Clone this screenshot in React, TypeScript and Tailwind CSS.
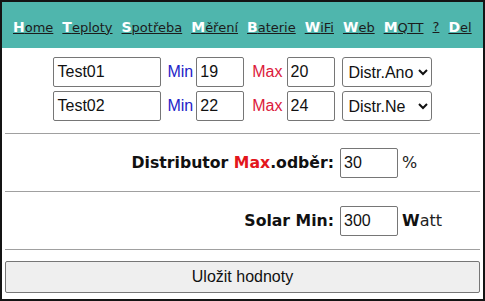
import React from 'react';

const navItems: { first: string; rest: string }[] = [
  { first: 'H', rest: 'ome' },
  { first: 'T', rest: 'eploty' },
  { first: 'S', rest: 'potřeba' },
  { first: 'M', rest: 'ěření' },
  { first: 'B', rest: 'aterie' },
  { first: 'W', rest: 'iFi' },
  { first: 'W', rest: 'eb' },
  { first: 'M', rest: 'QTT' },
  { first: '', rest: '?' },
  { first: 'D', rest: 'el' },
];

const inputCls =
  'h-[30px] border border-[#767676] rounded-[2px] bg-white px-[3px] text-[16px] text-[#111] outline-none';

const SensorRow = ({ name, min, max, distr }: { name: string; min: string; max: string; distr: string }) => (
  <div className="flex items-center justify-center">
    <input className={`${inputCls} w-[108px]`} defaultValue={name} />
    <span className="ml-[6px] mr-[3px] text-[16px] text-[#2323c8]">Min</span>
    <input className={`${inputCls} w-[48px]`} defaultValue={min} />
    <span className="ml-[8px] mr-[4px] text-[16px] text-[#dc1a3c]">Max</span>
    <input className={`${inputCls} w-[48px]`} defaultValue={max} />
    <select
      className="ml-[7px] h-[30px] w-[90px] border border-[#767676] rounded-[3px] bg-white pl-[2px] text-[16px] text-[#111]"
      defaultValue={distr}
    >
      <option value="Distr.Ano">Distr.Ano</option>
      <option value="Distr.Ne">Distr.Ne</option>
    </select>
  </div>
);

export default function App() {
  return (
    <div
      className="w-[485px] h-[301px] border-2 border-[#141414] bg-white flex flex-col"
      style={{ fontFamily: '"Liberation Sans", Arial, sans-serif' }}
    >
      {/* Menu */}
      <nav
        className="h-[46px] shrink-0 bg-[#4fb6ad] flex items-center gap-[9px] pl-[11px] pt-[4px] text-[13px]"
        style={{ fontFamily: '"DejaVu Sans", Verdana, sans-serif' }}
      >
        {navItems.map((item, i) => (
          <a key={i} href="#" className="text-[#1c1c1c] underline">
            {item.first && <span className="font-bold text-white text-[14px]">{item.first}</span>}
            {item.rest}
          </a>
        ))}
      </nav>

      <div className="flex-1 flex flex-col px-[3px]">
        <div className="mt-[9px] flex flex-col gap-[4px]">
          <SensorRow name="Test01" min="19" max="20" distr="Distr.Ano" />
          <SensorRow name="Test02" min="22" max="24" distr="Distr.Ne" />
        </div>

        <hr className="mt-[12px] border-t border-[#a0a0a0]" />

        <div
          className="mt-[14px] flex items-center text-[16px] text-[#111]"
          style={{ fontFamily: '"DejaVu Sans", Verdana, sans-serif' }}
        >
          <span className="w-[335px] pr-[6px] text-right font-bold text-[15.7px]">
            Distributor <span className="text-[#e3161c]">Max</span>.odběr:
          </span>
          <input
            className={`${inputCls} w-[58px]`}
            style={{ fontFamily: '"Liberation Sans", Arial, sans-serif' }}
            defaultValue="30"
          />
          <span className="ml-[4px] text-[#222]">%</span>
        </div>

        <hr className="mt-[13px] border-t border-[#a0a0a0]" />

        <div
          className="mt-[14px] flex items-center text-[16px] text-[#111]"
          style={{ fontFamily: '"DejaVu Sans", Verdana, sans-serif' }}
        >
          <span className="w-[335px] pr-[6px] text-right font-bold text-[15.7px]">Solar Min:</span>
          <input
            className={`${inputCls} w-[58px]`}
            style={{ fontFamily: '"Liberation Sans", Arial, sans-serif' }}
            defaultValue="300"
          />
          <span className="ml-[4px] text-[#222]">
            <b className="text-[#111]">W</b>att
          </span>
        </div>

        <hr className="mt-[13px] border-t border-[#a0a0a0]" />

        <button className="mt-[11px] h-[32px] w-full border border-[#767676] rounded-[2px] bg-[#efefef] text-[16px] text-[#111]">
          Uložit hodnoty
        </button>
      </div>
    </div>
  );
}
